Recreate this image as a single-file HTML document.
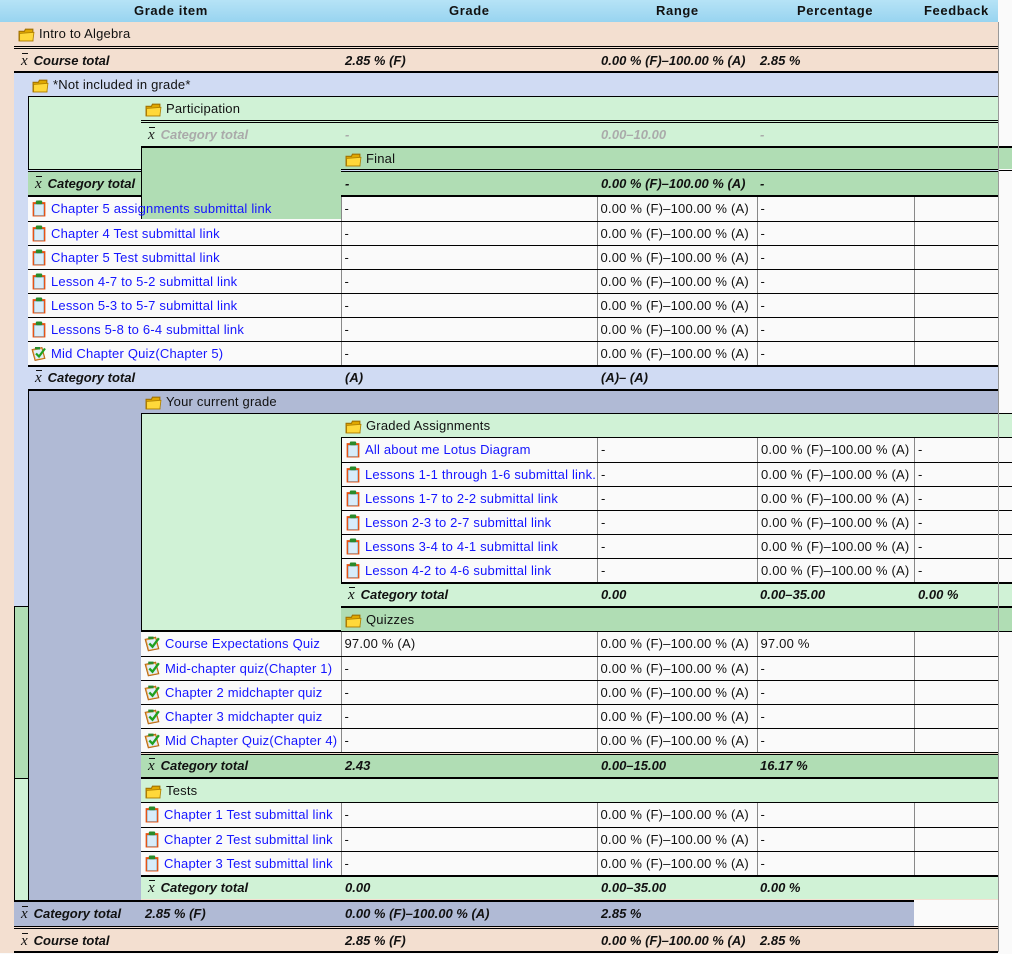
<!DOCTYPE html>
<html><head><meta charset="utf-8">
<style>
*{margin:0;padding:0;box-sizing:border-box}
body{width:1012px;height:954px;position:relative;background:#fafafa;font-family:"Liberation Sans","DejaVu Sans",sans-serif;font-size:13px;letter-spacing:0.2px;color:#111;overflow:hidden}
.b{position:absolute}
.k{position:absolute;background:#000}
.t{position:absolute;white-space:nowrap;line-height:23px;height:23px}
.bi{font-weight:bold;font-style:italic;letter-spacing:0}
.pe{background:#f3dfd0}.lv{background:#d0dbf3}.lg{background:#d0f2d6}.mg{background:#b0ddb4}.gb{background:#b0bad5}
.xb{font-family:"Liberation Serif",serif;font-style:italic;font-weight:normal;font-size:15px;position:relative;display:inline-block;margin-right:6px}
.xb:before{content:"";position:absolute;left:1px;right:0;top:3px;border-top:1px solid #111}
table{position:absolute;border-collapse:collapse;table-layout:fixed;background:#fafafa}
td{height:24px;border-bottom:1px solid #000;border-left:1px solid #888;padding:0 3px;white-space:nowrap;overflow:hidden;vertical-align:middle;line-height:23px}
td:first-child{border-left:none}
a{color:#1515ff;text-decoration:none}
svg{vertical-align:-4px;margin-right:4px}
.hd{position:absolute;left:0;top:0;width:998px;height:22px;background:linear-gradient(#b6e3f6,#98d4f0);font-weight:bold;letter-spacing:0.6px}
.hd span{position:absolute;top:3px}
</style></head><body>
<svg width="0" height="0" style="position:absolute">
<defs>
<symbol id="fo" viewBox="0 0 16 14"><path d="M1 4 L6 4 L7 2 L14 2 L14 13 L1 13 Z" fill="#e0a800" stroke="#a07000" stroke-width="1"/><path d="M1.5 6 L15 5 L14 13 L1.5 13 Z" fill="#ffd83a" stroke="#b08000" stroke-width="0.8"/></symbol>
<symbol id="cb" viewBox="0 0 14 16"><rect x="1" y="2" width="12" height="13.5" fill="#e85010" /><rect x="2.5" y="4" width="9" height="10.5" fill="#d8ecfa" stroke="#8ab" stroke-width="0.5"/><rect x="4" y="0.5" width="6" height="3.5" rx="1" fill="#2a8a2a"/></symbol>
<symbol id="qz" viewBox="0 0 16 16"><path d="M1 4 L11 2 L14 13 L4 15 Z" fill="#e8a040" stroke="#b06010" stroke-width="0.8"/><path d="M2.5 5 L10.5 3.5 L12.8 12.3 L4.8 13.8 Z" fill="#e0eefa"/><rect x="4" y="1.5" width="5" height="2.5" fill="#2a8a2a"/><path d="M5 8 L8 11 L14 3" fill="none" stroke="#20a020" stroke-width="2.2"/></symbol>
</defs></svg>

<div class="b pe" style="left:0;top:22px;width:998px;height:931px"></div>
<div class="hd"><span style="left:134px">Grade item</span><span style="left:449px">Grade</span><span style="left:656px">Range</span><span style="left:797px">Percentage</span><span style="left:924px">Feedback</span></div>

<div class="t" style="left:18px;top:22px;height:24px;line-height:24px"><svg width="17" height="15"><use href="#fo"/></svg>Intro to Algebra</div>
<div class="k" style="left:14px;top:46px;width:984px;height:1px"></div>
<div class="k" style="left:14px;top:48px;width:984px;height:1px"></div>
<div class="t bi" style="left:21px;top:49px"><span class="xb">x</span>Course total</div>
<div class="t bi" style="left:345px;top:49px">2.85 % (F)</div>
<div class="t bi" style="left:601px;top:49px">0.00 % (F)–100.00 % (A)</div>
<div class="t bi" style="left:760px;top:49px">2.85 %</div>
<div class="k" style="left:14px;top:71px;width:984px;height:2px"></div>

<div class="b lv" style="left:14px;top:73px;width:984px;height:318px"></div>
<div class="b lv" style="left:14px;top:391px;width:14px;height:215px"></div>
<div class="b mg" style="left:14px;top:607px;width:14px;height:171px"></div>
<div class="b lg" style="left:14px;top:779px;width:14px;height:122px"></div>
<div class="k" style="left:14px;top:606px;width:15px;height:1px"></div>
<div class="k" style="left:14px;top:778px;width:15px;height:1px"></div>
<div class="k" style="left:14px;top:606px;width:1px;height:296px"></div>

<div class="t" style="left:32px;top:73px"><svg width="17" height="15"><use href="#fo"/></svg>*Not included in grade*</div>
<div class="b lg" style="left:28px;top:96px;width:970px;height:74px;border-top:1px solid #000;border-left:1px solid #000"></div>
<div class="t" style="left:145px;top:97px"><svg width="17" height="15"><use href="#fo"/></svg>Participation</div>
<div class="k" style="left:141px;top:120px;width:857px;height:1px"></div>
<div class="k" style="left:141px;top:122px;width:857px;height:1px"></div>
<div class="t bi" style="left:148px;top:123px;color:#aaa"><span class="xb" style="color:#222">x</span>Category total</div>
<div class="t bi" style="left:345px;top:123px;color:#aaa">-</div>
<div class="t bi" style="left:601px;top:123px;color:#aaa">0.00–10.00</div>
<div class="t bi" style="left:760px;top:123px;color:#aaa">-</div>
<div class="k" style="left:141px;top:146px;width:871px;height:2px"></div>
<div class="b mg" style="left:341px;top:148px;width:671px;height:21px"></div>
<div class="t" style="left:345px;top:147px"><svg width="17" height="15"><use href="#fo"/></svg>Final</div>
<div class="k" style="left:998px;top:170px;width:14px;height:1px"></div>
<div class="b mg" style="left:28px;top:172px;width:970px;height:23px"></div>
<div class="k" style="left:28px;top:169px;width:113px;height:1px"></div>
<div class="k" style="left:28px;top:171px;width:113px;height:1px"></div>
<div class="k" style="left:341px;top:169px;width:657px;height:1px"></div>
<div class="k" style="left:341px;top:171px;width:657px;height:1px"></div>
<div class="t bi" style="left:35px;top:172px"><span class="xb">x</span>Category total</div>
<div class="t bi" style="left:345px;top:172px">-</div>
<div class="t bi" style="left:601px;top:172px">0.00 % (F)–100.00 % (A)</div>
<div class="t bi" style="left:760px;top:172px">-</div>
<div class="k" style="left:28px;top:195px;width:970px;height:2px"></div>

<table style="left:28px;top:197px;width:970px">
<colgroup><col style="width:313px"><col style="width:256px"><col style="width:160px"><col style="width:157px"><col style="width:84px"></colgroup>
<tr><td><svg width="16" height="17"><use href="#cb"/></svg><a>Chapter 5 assignments submittal link</a></td><td>-</td><td>0.00 % (F)–100.00 % (A)</td><td>-</td><td></td></tr>
<tr><td><svg width="16" height="17"><use href="#cb"/></svg><a>Chapter 4 Test submittal link</a></td><td>-</td><td>0.00 % (F)–100.00 % (A)</td><td>-</td><td></td></tr>
<tr><td><svg width="16" height="17"><use href="#cb"/></svg><a>Chapter 5 Test submittal link</a></td><td>-</td><td>0.00 % (F)–100.00 % (A)</td><td>-</td><td></td></tr>
<tr><td><svg width="16" height="17"><use href="#cb"/></svg><a>Lesson 4-7 to 5-2 submittal link</a></td><td>-</td><td>0.00 % (F)–100.00 % (A)</td><td>-</td><td></td></tr>
<tr><td><svg width="16" height="17"><use href="#cb"/></svg><a>Lesson 5-3 to 5-7 submittal link</a></td><td>-</td><td>0.00 % (F)–100.00 % (A)</td><td>-</td><td></td></tr>
<tr><td><svg width="16" height="17"><use href="#cb"/></svg><a>Lessons 5-8 to 6-4 submittal link</a></td><td>-</td><td>0.00 % (F)–100.00 % (A)</td><td>-</td><td></td></tr>
<tr><td><svg width="16" height="17"><use href="#qz"/></svg><a>Mid Chapter Quiz(Chapter 5)</a></td><td>-</td><td>0.00 % (F)–100.00 % (A)</td><td>-</td><td></td></tr>
</table>
<div class="b mg" style="left:141px;top:148px;width:200px;height:71px;border-left:1px solid #000"></div>
<div class="t" style="left:52px;top:197px;height:24px;line-height:24px;color:#1515ff;clip-path:inset(0 0 0 89px)">Chapter 5 assignments submittal link</div>

<div class="k" style="left:28px;top:366px;width:970px;height:1px"></div>
<div class="t bi" style="left:35px;top:366px"><span class="xb">x</span>Category total</div>
<div class="t bi" style="left:345px;top:366px">(A)</div>
<div class="t bi" style="left:601px;top:366px">(A)– (A)</div>
<div class="k" style="left:28px;top:389px;width:970px;height:2px"></div>

<div class="b gb" style="left:28px;top:391px;width:970px;height:22px;border-left:1px solid #000"></div>
<div class="b gb" style="left:28px;top:391px;width:113px;height:511px;border-left:1px solid #000"></div>
<div class="t" style="left:145px;top:390px"><svg width="17" height="15"><use href="#fo"/></svg>Your current grade</div>
<div class="b lg" style="left:141px;top:413px;width:871px;height:218px;border-top:1px solid #000;border-left:1px solid #000"></div>
<div class="t" style="left:345px;top:414px"><svg width="17" height="15"><use href="#fo"/></svg>Graded Assignments</div>
<div class="k" style="left:341px;top:437px;width:671px;height:1px"></div>
<table style="left:341px;top:438px;width:671px">
<colgroup><col style="width:256px"><col style="width:160px"><col style="width:157px"><col style="width:84px"><col style="width:14px"></colgroup>
<tr><td style="border-left:1px solid #000"><svg width="16" height="17"><use href="#cb"/></svg><a>All about me Lotus Diagram</a></td><td>-</td><td>0.00 % (F)–100.00 % (A)</td><td>-</td><td></td></tr>
<tr><td style="border-left:1px solid #000"><svg width="16" height="17"><use href="#cb"/></svg><a>Lessons 1-1 through 1-6 submittal link.</a></td><td>-</td><td>0.00 % (F)–100.00 % (A)</td><td>-</td><td></td></tr>
<tr><td style="border-left:1px solid #000"><svg width="16" height="17"><use href="#cb"/></svg><a>Lessons 1-7 to 2-2 submittal link</a></td><td>-</td><td>0.00 % (F)–100.00 % (A)</td><td>-</td><td></td></tr>
<tr><td style="border-left:1px solid #000"><svg width="16" height="17"><use href="#cb"/></svg><a>Lesson 2-3 to 2-7 submittal link</a></td><td>-</td><td>0.00 % (F)–100.00 % (A)</td><td>-</td><td></td></tr>
<tr><td style="border-left:1px solid #000"><svg width="16" height="17"><use href="#cb"/></svg><a>Lessons 3-4 to 4-1 submittal link</a></td><td>-</td><td>0.00 % (F)–100.00 % (A)</td><td>-</td><td></td></tr>
<tr><td style="border-left:1px solid #000"><svg width="16" height="17"><use href="#cb"/></svg><a>Lesson 4-2 to 4-6 submittal link</a></td><td>-</td><td>0.00 % (F)–100.00 % (A)</td><td>-</td><td></td></tr>
</table>
<div class="k" style="left:341px;top:583px;width:671px;height:1px"></div>
<div class="t bi" style="left:348px;top:583px"><span class="xb">x</span>Category total</div>
<div class="t bi" style="left:601px;top:583px">0.00</div>
<div class="t bi" style="left:760px;top:583px">0.00–35.00</div>
<div class="t bi" style="left:918px;top:583px">0.00 %</div>
<div class="k" style="left:341px;top:606px;width:671px;height:2px"></div>
<div class="b mg" style="left:341px;top:608px;width:671px;height:23px"></div>
<div class="t" style="left:345px;top:608px"><svg width="17" height="15"><use href="#fo"/></svg>Quizzes</div>
<div class="k" style="left:141px;top:630px;width:200px;height:2px"></div>
<div class="k" style="left:341px;top:631px;width:671px;height:1px"></div>

<table style="left:141px;top:632px;width:857px">
<colgroup><col style="width:200px"><col style="width:256px"><col style="width:160px"><col style="width:157px"><col style="width:84px"></colgroup>
<tr><td><svg width="17" height="17"><use href="#qz"/></svg><a>Course Expectations Quiz</a></td><td>97.00 % (A)</td><td>0.00 % (F)–100.00 % (A)</td><td>97.00 %</td><td></td></tr>
<tr><td><svg width="17" height="17"><use href="#qz"/></svg><a>Mid-chapter quiz(Chapter 1)</a></td><td>-</td><td>0.00 % (F)–100.00 % (A)</td><td>-</td><td></td></tr>
<tr><td><svg width="17" height="17"><use href="#qz"/></svg><a>Chapter 2 midchapter quiz</a></td><td>-</td><td>0.00 % (F)–100.00 % (A)</td><td>-</td><td></td></tr>
<tr><td><svg width="17" height="17"><use href="#qz"/></svg><a>Chapter 3 midchapter quiz</a></td><td>-</td><td>0.00 % (F)–100.00 % (A)</td><td>-</td><td></td></tr>
<tr><td><svg width="17" height="17"><use href="#qz"/></svg><a>Mid Chapter Quiz(Chapter 4)</a></td><td>-</td><td>0.00 % (F)–100.00 % (A)</td><td>-</td><td></td></tr>
</table>
<div class="k" style="left:141px;top:754px;width:857px;height:1px"></div>
<div class="b mg" style="left:141px;top:755px;width:857px;height:22px"></div>
<div class="t bi" style="left:148px;top:754px"><span class="xb">x</span>Category total</div>
<div class="t bi" style="left:345px;top:754px">2.43</div>
<div class="t bi" style="left:601px;top:754px">0.00–15.00</div>
<div class="t bi" style="left:760px;top:754px">16.17 %</div>
<div class="k" style="left:141px;top:777px;width:857px;height:2px"></div>
<div class="b lg" style="left:141px;top:779px;width:857px;height:23px"></div>
<div class="t" style="left:145px;top:779px"><svg width="17" height="15"><use href="#fo"/></svg>Tests</div>
<div class="k" style="left:141px;top:802px;width:857px;height:1px"></div>
<table style="left:141px;top:803px;width:857px">
<colgroup><col style="width:200px"><col style="width:256px"><col style="width:160px"><col style="width:157px"><col style="width:84px"></colgroup>
<tr><td><svg width="16" height="17"><use href="#cb"/></svg><a>Chapter 1 Test submittal link</a></td><td>-</td><td>0.00 % (F)–100.00 % (A)</td><td>-</td><td></td></tr>
<tr><td><svg width="16" height="17"><use href="#cb"/></svg><a>Chapter 2 Test submittal link</a></td><td>-</td><td>0.00 % (F)–100.00 % (A)</td><td>-</td><td></td></tr>
<tr><td><svg width="16" height="17"><use href="#cb"/></svg><a>Chapter 3 Test submittal link</a></td><td>-</td><td>0.00 % (F)–100.00 % (A)</td><td>-</td><td></td></tr>
</table>
<div class="k" style="left:141px;top:876px;width:857px;height:1px"></div>
<div class="b lg" style="left:141px;top:877px;width:857px;height:22px"></div>
<div class="t bi" style="left:148px;top:876px"><span class="xb">x</span>Category total</div>
<div class="t bi" style="left:345px;top:876px">0.00</div>
<div class="t bi" style="left:601px;top:876px">0.00–35.00</div>
<div class="t bi" style="left:760px;top:876px">0.00 %</div>
<div class="k" style="left:14px;top:900px;width:900px;height:2px"></div>
<div class="k" style="left:28px;top:391px;width:1px;height:510px"></div>

<div class="b" style="left:914px;top:900px;width:84px;height:26px;background:#fafafa"></div>
<div class="b gb" style="left:14px;top:902px;width:900px;height:24px"></div>
<div class="t bi" style="left:21px;top:902px"><span class="xb">x</span>Category total</div>
<div class="t bi" style="left:145px;top:902px">2.85 % (F)</div>
<div class="t bi" style="left:345px;top:902px">0.00 % (F)–100.00 % (A)</div>
<div class="t bi" style="left:601px;top:902px">2.85 %</div>
<div class="k" style="left:14px;top:926px;width:984px;height:1px"></div>
<div class="k" style="left:14px;top:928px;width:984px;height:1px"></div>
<div class="t bi" style="left:21px;top:929px"><span class="xb">x</span>Course total</div>
<div class="t bi" style="left:345px;top:929px">2.85 % (F)</div>
<div class="t bi" style="left:601px;top:929px">0.00 % (F)–100.00 % (A)</div>
<div class="t bi" style="left:760px;top:929px">2.85 %</div>
<div class="k" style="left:14px;top:951px;width:984px;height:2px"></div>
<div class="b" style="left:998px;top:22px;width:1px;height:930px;background:#999"></div>
</body></html>
